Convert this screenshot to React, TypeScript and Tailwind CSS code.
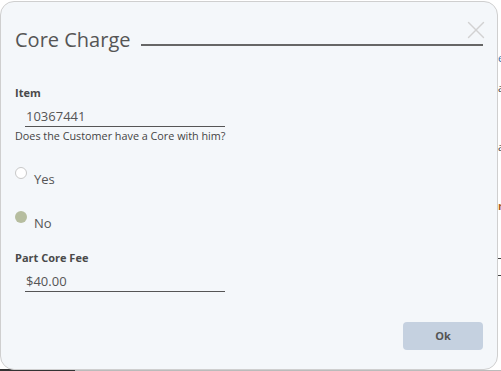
import { X } from "lucide-react";

const font = { fontFamily: '"Open Sans", "Noto Sans", sans-serif' };

function Field({ label, value }: { label: string; value: string }) {
  return (
    <div className="flex flex-col">
      <label className="text-[11px] font-bold leading-[14px] text-[#4a4a4a]">{label}</label>
      <div className="mt-[8px] ml-[10px] w-[200px] border-b border-[#555] pb-[1px] pl-[1px] text-[13px] leading-[17px] text-[#555]">
        {value}
      </div>
    </div>
  );
}

function Radio({ label, checked }: { label: string; checked?: boolean }) {
  return (
    <div className="flex items-start">
      <span
        className={
          checked
            ? "h-[12px] w-[12px] rounded-full bg-[#b6bd9f]"
            : "h-[12px] w-[12px] rounded-full border border-[#c8c8c8] bg-white"
        }
      />
      <span className="ml-[7px] mt-[4px] text-[13px] leading-[17px] text-[#555]">{label}</span>
    </div>
  );
}

export default function App() {
  return (
    <div className="relative h-[371px] w-[501px] overflow-hidden bg-white" style={font}>
      {/* page behind the dialog */}
      <span className="absolute left-[498px] top-[52px] text-[11px] leading-[12px] text-[#3a6ea5]">e</span>
      <span className="absolute left-[498px] top-[82px] text-[11px] leading-[12px] text-[#444]">a</span>
      <span className="absolute left-[498px] top-[141px] text-[11px] leading-[12px] text-[#444]">a</span>
      <span className="absolute left-[498px] top-[200px] text-[11px] font-bold leading-[12px] text-[#b0601e]">r</span>
      <div className="absolute left-[498px] top-[258px] h-px w-[3px] bg-[#444]" />
      <div className="absolute left-[498px] top-[275px] h-px w-[3px] bg-[#444]" />
      <div className="absolute bottom-0 left-0 h-[2px] w-[75px] bg-[#333]" />
      <div className="absolute bottom-0 left-[75px] h-px w-[426px] bg-[#bbb]" />

      <div className="absolute left-0 top-[1px] flex h-[369px] w-[498px] flex-col rounded-[14px] border border-[#cfcfcf] bg-[#f4f7fa] px-[14px]">
        <div className="flex items-end pt-[24px]">
          <h2 className="text-[20px] leading-[27px] text-[#555]">Core Charge</h2>
          <div className="mb-[7px] ml-[11px] h-[2px] flex-1 bg-[#666]" />
          <X
            className="absolute right-[6px] top-[13px] text-[#d2d2d2]"
            size={30}
            strokeWidth={1.1}
          />
        </div>

        <div className="mt-[33px]">
          <Field label="Item" value="10367441" />
        </div>
        <p className="mt-[2px] text-[10.8px] leading-[13px] text-[#444]">
          Does the Customer have a Core with him?
        </p>

        <div className="mt-[25px] flex flex-col gap-[23px]">
          <Radio label="Yes" />
          <Radio label="No" checked />
        </div>

        <div className="mt-[19px]">
          <Field label="Part Core Fee" value="$40.00" />
        </div>

        <div className="mt-auto mb-[19px] flex justify-end">
          <button className="h-[28px] w-[80px] rounded-[4px] bg-[#c5d1e0] text-[11px] font-bold text-[#555]">
            Ok
          </button>
        </div>
      </div>
    </div>
  );
}
